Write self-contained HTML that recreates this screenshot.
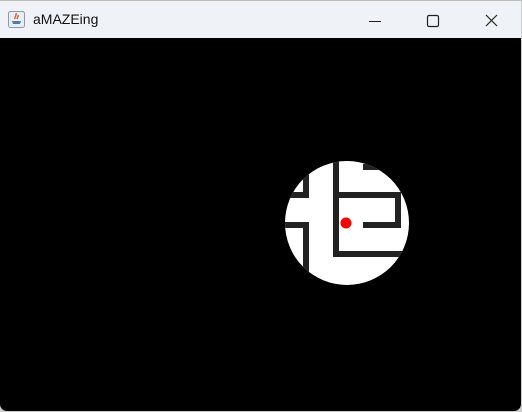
<!DOCTYPE html>
<html><head><style>
body{margin:0;width:522px;height:412px;overflow:hidden;background:#ccc;font-family:"Liberation Sans",sans-serif}
#win{position:absolute;left:0;top:0;width:521px;height:411px;background:#000;border-radius:0 0 7px 7px;overflow:hidden}
#tb{position:absolute;left:0;top:0;width:521px;height:38px;background:#eff3f8;border-top:1px solid #bbb;box-sizing:border-box}
#title{position:absolute;left:33px;top:10px;font-size:14px;color:#111}
</style></head><body>
<div id="win">
<div id="tb">
<svg width="521" height="38" style="position:absolute;left:0;top:0">
<rect x="8.5" y="10.5" width="16" height="16" rx="2" fill="#e8eef5" stroke="#8a9ab0"/>
<path d="M12 20h9l-1 3h-7z" fill="#5a7aa0"/>
<path d="M15 18c-1-2 2-3 1-6M17 18c0-2 2-2 1-4" stroke="#d06020" stroke-width="1.3" fill="none"/>
<line x1="369" y1="20.5" x2="381" y2="20.5" stroke="#222" stroke-width="1"/>
<rect x="427.5" y="14.5" width="11" height="11" rx="1.5" fill="none" stroke="#222" stroke-width="1.2"/>
<path d="M486 14L497 25M497 14L486 25" stroke="#222" stroke-width="1.2"/>
</svg>
<div id="title">aMAZEing</div>
</div>
<svg width="521" height="411" style="position:absolute;left:0;top:0">
<defs><clipPath id="c"><circle cx="347" cy="223" r="62"/></clipPath></defs>
<circle cx="347" cy="223" r="62" fill="#fff"/>
<g clip-path="url(#c)" stroke="#222" stroke-width="6" fill="none" stroke-linecap="square">
<path d="M336 150V254H412"/>
<path d="M340 195H398V225H366"/>
<path d="M366 167H382"/>
<path d="M280 195H306V150"/>
<path d="M280 225H306V300"/>
</g>
<circle cx="346" cy="223" r="5.5" fill="#f00"/>
</svg>
</div>
</body></html>
